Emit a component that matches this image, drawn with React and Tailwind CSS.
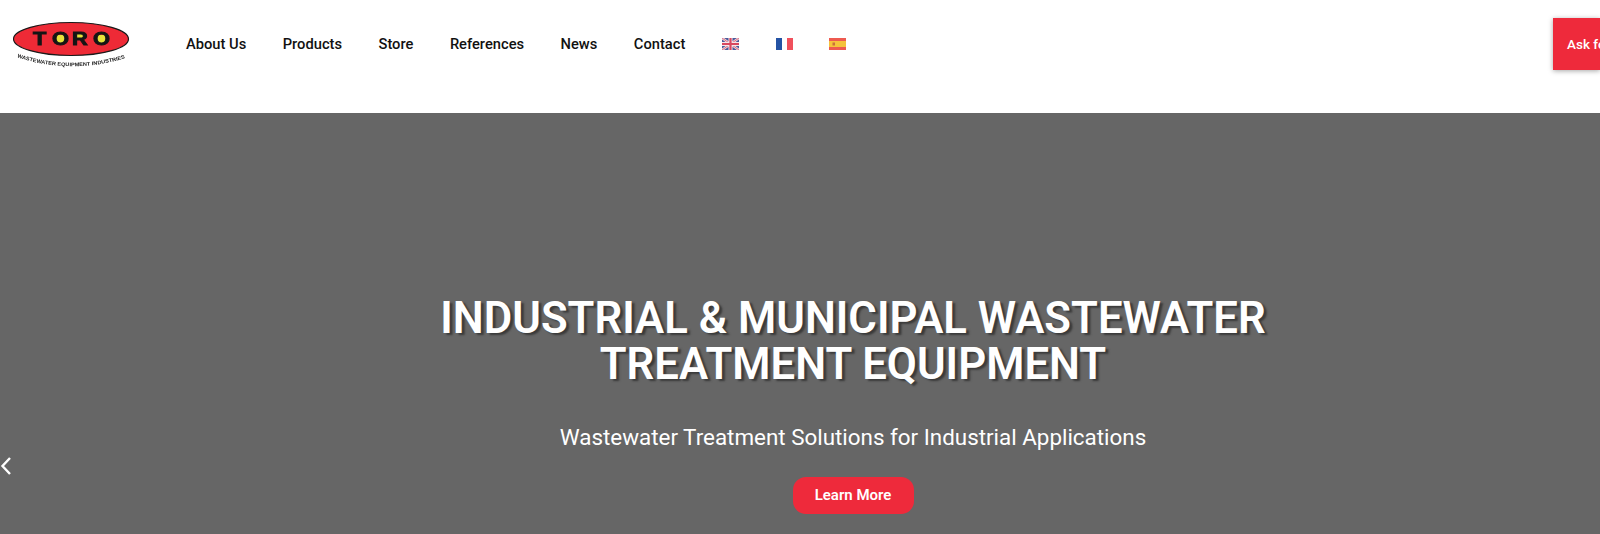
const NAV = ["About Us", "Products", "Store", "References", "News", "Contact"];

function Logo() {
  return (
    <svg width="120" height="50" viewBox="0 0 120 50" className="shrink-0 block" style={{ filter: "blur(0.4px)" }}>
      <ellipse cx="58" cy="18" rx="57.5" ry="16.5" fill="#ee2a36" stroke="#1a1a1a" strokeWidth="1.2" />
      <rect x="42" y="14" width="11" height="8" fill="#e8e23a" />
      <rect x="63" y="13" width="9" height="4" fill="#e8e23a" />
      <rect x="83" y="14" width="11" height="8" fill="#e8e23a" />
      <text transform="scale(1.25 1)" x="16 31.2 47.2 64" y="24.5" fontFamily="'Liberation Sans', sans-serif" fontWeight="700" fontSize="17.5" fill="#151515" stroke="#151515" strokeWidth="0.9">TORO</text>
      <path id="logoArc" d="M3 36 Q58 54 113 37" fill="none" />
      <text fontFamily="'Liberation Sans', sans-serif" fontWeight="700" fontSize="5.2" fill="#222">
        <textPath href="#logoArc" startOffset="1" textLength="110" lengthAdjust="spacingAndGlyphs">WASTEWATER EQUIPMENT INDUSTRIES</textPath>
      </text>
    </svg>
  );
}

function FlagUK() {
  return (
    <svg width="17" height="12" viewBox="0 0 17 12" className="block">
      <rect width="17" height="12" fill="#4a5a9a" />
      <path d="M0 0L17 12M17 0L0 12" stroke="#f2d5dc" strokeWidth="2.4" />
      <path d="M0 0L17 12M17 0L0 12" stroke="#d85a70" strokeWidth="0.8" />
      <path d="M8.5 0V12M0 6H17" stroke="#f5e6ea" strokeWidth="4" />
      <path d="M8.5 0V12M0 6H17" stroke="#d9475f" strokeWidth="2.2" />
    </svg>
  );
}

function FlagFR() {
  return (
    <svg width="17" height="12" viewBox="0 0 17 12" className="block">
      <rect width="6" height="12" fill="#2453a4" />
      <rect x="6" width="5" height="12" fill="#ffffff" />
      <rect x="11" width="6" height="12" fill="#f0505c" />
    </svg>
  );
}

function FlagES() {
  return (
    <svg width="17" height="12" viewBox="0 0 17 12" className="block">
      <rect width="17" height="12" fill="#ee5a50" />
      <rect y="3" width="17" height="6" fill="#f5c33b" />
      <rect x="3.5" y="4.5" width="2.5" height="3" fill="#c9703a" />
    </svg>
  );
}

export default function App() {
  return (
    <div className="w-[1600px] h-[534px] overflow-hidden flex flex-col bg-white font-['Roboto',sans-serif]">
      <header className="h-[113px] shrink-0 flex items-start">
        <div className="pl-[13px] pt-[21px] w-[186px] shrink-0">
          <Logo />
        </div>
        <nav className="flex items-center gap-[36.5px] pt-[34px] text-[14.7px] leading-[20px] font-medium text-[#111] whitespace-nowrap">
          {NAV.map((n) => (
            <a key={n} className="block">{n}</a>
          ))}
        </nav>
        <div className="flex items-center gap-[36.5px] pl-[37px] pt-[38px]">
          <FlagUK />
          <FlagFR />
          <FlagES />
        </div>
        <div className="ml-auto mt-[18px] w-[47px] h-[52px] bg-[#ee2a3b] shadow-[0_1px_5px_rgba(0,0,0,0.35)] overflow-hidden flex items-center pl-[14px] text-white text-[13.5px] font-medium whitespace-nowrap">
          Ask for a Quote
        </div>
      </header>
      <main className="relative flex-1 bg-[#666666] flex flex-col items-center pl-[106px] pt-[182px] text-white">
        <svg width="14" height="22" viewBox="0 0 14 22" className="absolute left-0 top-[342px]" fill="none">
          <path d="M10 3L2.5 11L10 19" stroke="#ffffff" strokeWidth="2.4" />
        </svg>
        <h1 className="text-[43.7px] leading-[46px] font-semibold text-center [text-shadow:3px_2px_2px_#3a3a3a]">
          INDUSTRIAL &amp; MUNICIPAL WASTEWATER
          <br />
          TREATMENT EQUIPMENT
        </h1>
        <p className="mt-[34px] text-[22.4px] leading-[32px]">Wastewater Treatment Solutions for Industrial Applications</p>
        <a className="mt-[24px] w-[121px] h-[37px] rounded-[13px] bg-[#ee2a3b] flex items-center justify-center text-[15px] font-semibold">
          Learn More
        </a>
      </main>
    </div>
  );
}
